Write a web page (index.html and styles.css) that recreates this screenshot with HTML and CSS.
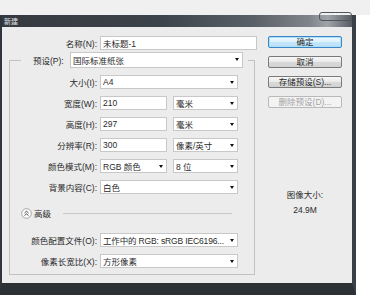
FILE: index.html
```html
<!DOCTYPE html>
<html lang="zh-CN">
<head>
<meta charset="utf-8">
<title>新建</title>
<link rel="stylesheet" href="styles.css">
</head>
<body>
<div class="topbar"></div>
<div class="window">
  <div class="titlebar"><span class="title">新建</span></div>
  <div class="close"><i class="x"></i></div>
  <div class="client">
    <div class="form">
      <div class="row name-row">
        <span class="lbl">名称(N):</span>
        <div class="f w-name">未标题-1</div>
      </div>
      <fieldset class="group">
        <legend class="legend">
          <span class="lbl-legend">预设(P):</span>
          <div class="f sel w-preset">国际标准纸张</div>
        </legend>
        <div class="row first">
          <span class="lbl">大小(I):</span>
          <div class="f sel w-full">A4</div>
        </div>
        <div class="row">
          <span class="lbl">宽度(W):</span>
          <div class="f w-num">210</div>
          <div class="f sel w-unit">毫米</div>
        </div>
        <div class="row">
          <span class="lbl">高度(H):</span>
          <div class="f w-num">297</div>
          <div class="f sel w-unit">毫米</div>
        </div>
        <div class="row">
          <span class="lbl">分辨率(R):</span>
          <div class="f w-num">300</div>
          <div class="f sel w-unit">像素/英寸</div>
        </div>
        <div class="row">
          <span class="lbl">颜色模式(M):</span>
          <div class="f sel w-num">RGB 颜色</div>
          <div class="f sel w-unit">8 位</div>
        </div>
        <div class="row">
          <span class="lbl">背景内容(C):</span>
          <div class="f sel w-full">白色</div>
        </div>
        <div class="adv">
          <svg class="adv-icon" width="11" height="11" viewBox="0 0 11 11">
            <circle cx="5.5" cy="5.5" r="4.8" fill="#fdfdfd" stroke="#9c9c9c" stroke-width="0.9"/>
            <path d="M3.5 5 L5.5 3.2 L7.5 5 M3.5 7.6 L5.5 5.8 L7.5 7.6" fill="none" stroke="#333" stroke-width="0.9"/>
          </svg>
          <span class="adv-text">高级</span>
          <span class="adv-line"></span>
        </div>
        <div class="row after-adv">
          <span class="lbl">颜色配置文件(O):</span>
          <div class="f sel w-full tight">工作中的 RGB: sRGB IEC6196...</div>
        </div>
        <div class="row">
          <span class="lbl">像素长宽比(X):</span>
          <div class="f sel w-full">方形像素</div>
        </div>
      </fieldset>
    </div>
    <div class="side">
      <div class="btn default">确定</div>
      <div class="btn">取消</div>
      <div class="btn">存储预设(S)...</div>
      <div class="btn disabled">删除预设(D)...</div>
      <div class="size-label">图像大小:</div>
      <div class="size-val">24.9M</div>
    </div>
  </div>
</div>
</body>
</html>
```
FILE: styles.css
```css
* { box-sizing: border-box; }
html, body { margin: 0; padding: 0; }
body {
  width: 370px;
  height: 295px;
  overflow: hidden;
  background: #ffffff;
  font-family: "Liberation Sans", "Noto Sans CJK SC", sans-serif;
  font-size: 8.5px;
  color: #2a2a2a;
}
.topbar { height: 15px; background: #f0f0f0; }
.window {
  position: relative;
  width: 356px;
  height: 280px;
  border-left: 2px solid #30353b;
  border-right: 4px solid #3a4047;
  border-bottom: 12px solid #2c3136;
}
.titlebar {
  height: 12px;
  background: linear-gradient(to right, #353a40 0%, #3d434a 45%, #5a6067 72%, #80858b 88%, #a0a4a8 93%, #565c63 100%);
  line-height: 12px;
}
.title { padding-left: 2px; font-size: 7px; color: #e0e2e4; }
.close {
  position: absolute;
  left: 317px;
  top: -3px;
  width: 33px;
  height: 9px;
  border: 1px solid #50565d;
  border-radius: 3px;
}
.close .x {
  position: absolute;
  left: 15px;
  top: 0;
  width: 4px;
  height: 2px;
  border-left: 1px solid #fff;
  border-right: 1px solid #fff;
}
.client {
  height: 256px;
  background: #ececec;
  display: flex;
}
.form { width: 256px; padding-top: 9px; }
.row { display: flex; align-items: center; height: 14px; margin-top: 7px; }
.name-row { margin-top: 0; }
.lbl { width: 87px; margin-right: 3px; text-align: right; white-space: nowrap; }
.name-row .lbl { width: 95px; }
.f {
  position: relative;
  display: flex;
  align-items: center;
  height: 14px;
  background: #ffffff;
  border: 1px solid #c8c8c8;
  padding-left: 2px;
  white-space: nowrap;
  overflow: hidden;
}
.tight { letter-spacing: -0.15px; }
.sel::after {
  content: "";
  position: absolute;
  right: 3px;
  top: 5px;
  border-left: 2.5px solid transparent;
  border-right: 2.5px solid transparent;
  border-top: 3px solid #111;
}
.w-name { width: 157px; }
.w-full { width: 138px; }
.w-num { width: 67px; }
.w-unit { width: 65px; margin-left: 6px; }
.w-preset { width: 173px; height: 16px; }
.group {
  margin: 2px 0 0 7px;
  width: 246px;
  padding: 0 0 6px 0;
  border: 1px solid #c2c2c2;
  min-width: 0;
}
.legend {
  margin-left: 11px;
  padding: 0 5px 0 12px;
  display: flex;
  align-items: center;
}
.lbl-legend { width: 34px; margin-right: 3px; white-space: nowrap; }
.adv {
  display: flex;
  align-items: center;
  height: 12px;
  margin-top: 13px;
  padding-left: 11px;
}
.adv-icon { display: block; }
.adv-text { margin-left: 2px; }
.adv-line {
  flex: 1;
  height: 1px;
  background: #c8c8c8;
  margin: 0 22px 0 12px;
}
.after-adv { margin-top: 14px; }
.side {
  width: 94px;
  padding-top: 9px;
  display: flex;
  flex-direction: column;
  align-items: center;
}
.btn {
  width: 74px;
  height: 12px;
  margin-bottom: 8px;
  border: 1px solid #7a7a7a;
  border-radius: 2px;
  background: linear-gradient(#f7f7f7, #e9e9e9 50%, #d9d9d9 51%, #d2d2d2);
  font-size: 8.5px;
  line-height: 10px;
  text-align: center;
  white-space: nowrap;
}
.btn.default {
  border-color: #3a86c4;
  background: linear-gradient(#eef8fe, #dcf1fc 50%, #c5e6fa 51%, #b8dff7);
  box-shadow: inset 0 0 0 1px #aee0fb;
}
.btn.disabled {
  color: #a3a3a3;
  border-color: #b9b9b9;
  background: #f3f3f3;
}
.size-label { margin-top: 73px; line-height: 12px; }
.size-val { margin-top: 3px; line-height: 12px; }
```
